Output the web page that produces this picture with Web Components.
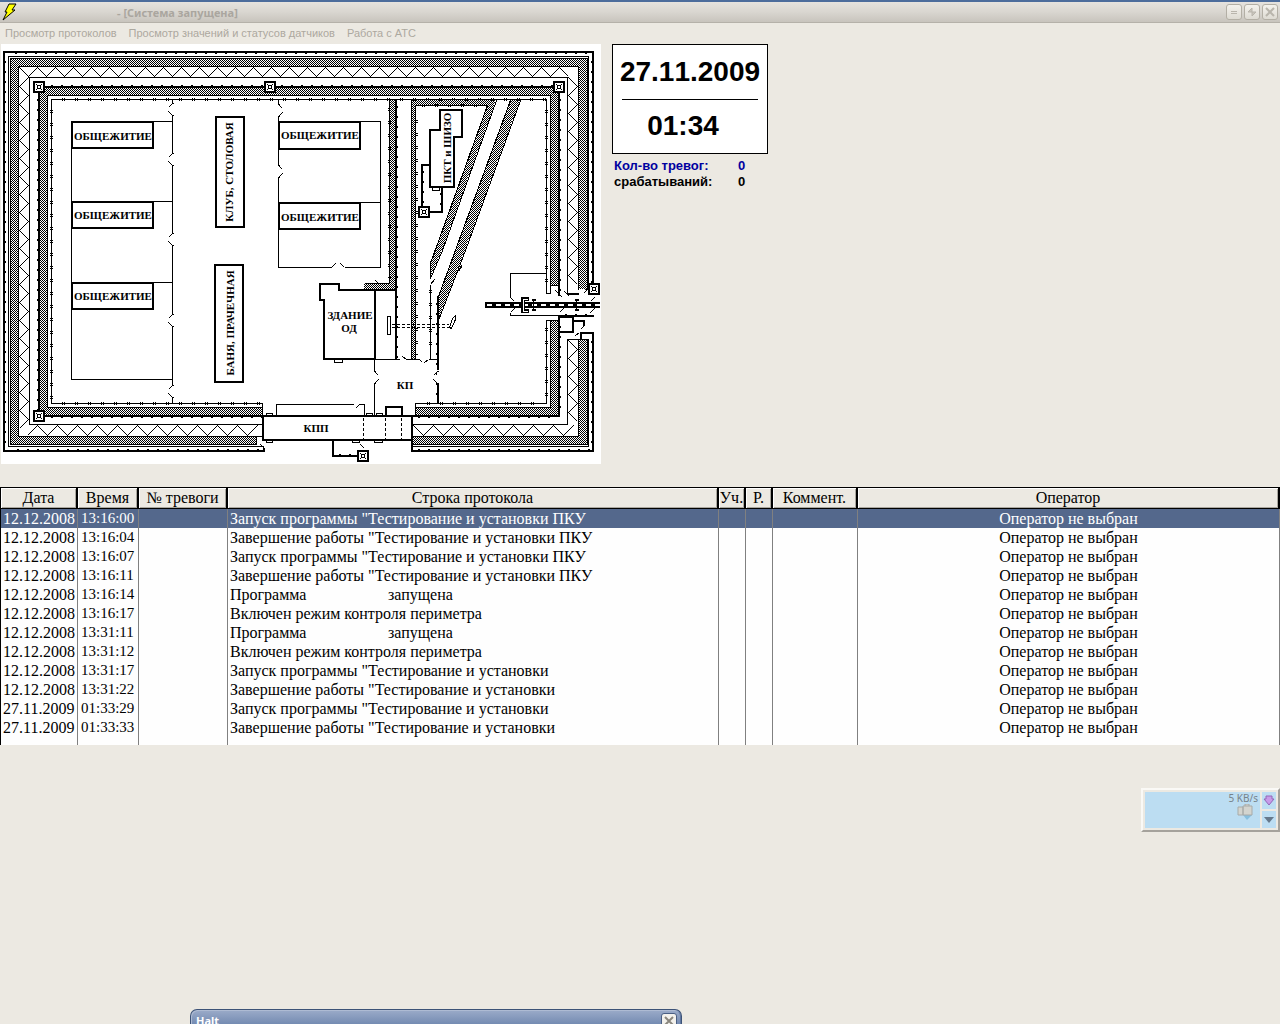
<!DOCTYPE html>
<html lang="ru">
<head>
<meta charset="utf-8">
<meta name="viewport" content="width=device-width, initial-scale=1">
<title>Система запущена</title>
<style>
  *, ::before, ::after {
    box-sizing: border-box;
  }

  body {
    background-color: #ece9e2;
    font-family: "Noto Sans", sans-serif;
    margin: 0;
    min-height: 100vh;
    overflow: hidden;
    position: relative;
  }

  main {
    align-items: flex-start;
    display: flex;
    gap: 11px;
    padding: 0 0 23px 1px;
  }
</style>
</head>
<body>
<app-title>- [Система запущена]</app-title>
<app-menu>
  <menu-item>Просмотр протоколов</menu-item>
  <menu-item>Просмотр значений и статусов датчиков</menu-item>
  <menu-item>Работа с АТС</menu-item>
</app-menu>
<main>
  <site-plan></site-plan>
  <aside>
    <clock-panel><span slot="date">27.11.2009</span><span slot="time">01:34</span></clock-panel>
    <alarm-counter value="0" style="--counter-color: #0000a0">Кол-во тревог:</alarm-counter>
    <alarm-counter value="0">срабатываний:</alarm-counter>
  </aside>
</main>
<protocol-log></protocol-log>
<traffic-meter>5 KB/s</traffic-meter>
<halt-window>Halt</halt-window>

<script>
const define = (name, markup, setup) => {
  customElements.define(name, class extends HTMLElement {
    constructor() {
      super();
      this.attachShadow({ mode: "open" });
      this.shadowRoot.innerHTML = `
      <style>
        *, ::before, ::after, :host {
          box-sizing: border-box;
        }
      </style>
      ${markup}`;
    }

    connectedCallback() {
      if (setup) setup(this, this.shadowRoot);
    }
  });
};

define("app-title", `
  <style>
    :host {
      align-items: center;
      background: linear-gradient(#e6e3de, #d9d6d0 50%, #c8c4bd);
      border-bottom: 1px solid #b5b1a9;
      border-top: 2px solid #4d6d9c;
      color: #aaa69f;
      display: flex;
      font: bold 11px "Noto Sans", sans-serif;
      height: 23px;
      padding: 0 2px;
    }
    h1 {
      flex: 1;
      font: inherit;
      margin: 0;
      padding-left: 98px;
      white-space: pre;
    }
    div {
      display: flex;
      gap: 2px;
    }
    button {
      background: linear-gradient(#f4f2ed, #dedbd3);
      border: 1px solid #b3afa5;
      border-radius: 3px;
      display: block;
      height: 16px;
      padding: 0;
      width: 16px;
    }
    svg {
      display: block;
    }
  </style>
  <svg width="17" height="18" viewBox="0 0 17 18" aria-hidden="true">
    <path d="M7 1h7l-4 6h3L1 17l4-8H3z" fill="#ff0" stroke="#000"/>
  </svg>
  <h1><slot></slot></h1>
  <div>
    <button type="button" aria-label="Свернуть"><svg width="14" height="14"><path d="M4 6.500h6M4 8.500h6" stroke="#b9b5ac"/></svg></button>
    <button type="button" aria-label="Восстановить"><svg width="14" height="14"><path d="M7 3v4H3zM7 11V7h4z" fill="#c9c5bc" stroke="#b9b5ac"/></svg></button>
    <button type="button" aria-label="Закрыть"><svg width="14" height="14"><path d="M3 3l8 8M11 3l-8 8" stroke="#b9b5ac" stroke-width="2"/></svg></button>
  </div>
`);

define("app-menu", `
  <style>
    :host {
      align-items: center;
      display: flex;
      gap: 12px;
      height: 21px;
      padding: 0 5px 2px;
    }
  </style>
  <slot></slot>
`);

define("menu-item", `
  <style>
    :host {
      display: block;
    }
    button {
      background: none;
      border: 0;
      color: #aca89f;
      display: block;
      font: 11px "Liberation Sans", sans-serif;
      padding: 0;
      white-space: nowrap;
    }
  </style>
  <button type="button"><slot></slot></button>
`);

// Zigzag fence: runs from `from` to `to`, bouncing between `a` and `b`
const zigzag = (axis, from, to, step, a, b) => {
  const points = [];
  for (let p = from, i = 0; p <= to; p += step, i++) {
    const q = i % 2 ? b : a;
    points.push(axis === "x" ? `${p},${q}` : `${q},${p}`);
  }
  return `<polyline points="${points.join(" ")}"/>`;
};

const tower = (x, y) => `<use href="#tower" x="${x}" y="${y}"/>`;

// Gates in a vertical fence, d is the side they open to
const gate = (x, y, d) => `
  <path d="M${x} ${y}l${4 * d} 4M${x + 4 * d} ${y + 8}l${-4 * d} 4"/>
  <path d="M${x - 1} ${y}h2M${x - 1} ${y + 12}h2"/>`;

define("site-plan", `
  <style>
    :host {
      display: block;
      flex: none;
    }
    svg {
      background-color: white;
      display: block;
    }
    g, use {
      fill: none;
      shape-rendering: crispEdges;
      stroke: black;
    }
    .hatch {
      fill: url(#hatch);
      stroke: none;
    }
    .thick {
      stroke-width: 2;
    }
    .posts {
      stroke-dasharray: 2 8;
    }
    .ticks {
      stroke-dasharray: 1 1 1 10;
      stroke-width: 3;
    }
    .dashes {
      stroke-dasharray: 3 2;
    }
    text {
      font: bold 11px "Liberation Serif", serif;
      text-anchor: middle;
    }
  </style>
  <svg width="600" height="420" viewBox="1 44 600 420" role="img" aria-label="План объекта">
    <defs>
      <pattern id="hatch" width="2" height="2" patternUnits="userSpaceOnUse">
        <rect width="2" height="2" fill="white"/>
        <path d="M0 0h1v1H0zM1 1h1v1H1z" fill="black" shape-rendering="crispEdges"/>
      </pattern>
      <g id="tower">
        <rect x="1" y="1" width="10" height="10" fill="white" stroke-width="2"/>
        <path d="M3 3l6 6M9 3l-6 6"/>
        <rect x="4.500" y="4.500" width="3" height="3" fill="white"/>
      </g>
    </defs>

    <g class="hatch">
      <path d="M10 58h577v231h-9V66H18v370h238v8H10z"/>
      <path d="M578 339h9v105H412v-8h166z"/>
      <path d="M40 88h519v197h-9V95H47v312h215v8H40z"/>
      <path d="M550 320h9v95H415v-8h135z"/>
      <path d="M389 100h6v189h-31v-6h25z"/>
      <path d="M411 100h85l-54 150-12 28v-15l57-158h-71v254h-5z"/>
      <path d="M510 100h10l-55 150-27 70v-24z"/>
    </g>

    <g transform="translate(.5 .5)">
      <path d="M588 289V56H8v390h255M587 289V58H10v386h246v-8"/>
      <path d="M578 289V66H18v370h245M567 293V77H29v347h234"/>
      <path d="M588 339v107H412M587 339v105H412M578 339v97H412M567 424V339h21M412 424h155"/>
      <path d="M550 293V95H47v312h215M546 293V99H51v304h211v12M546 293h4M550 285h9"/>
      <path d="M559 320h-13v83H415v12M550 320v87H415"/>
      ${zigzag("x", 19, 574, 9, 67, 76)}
      ${zigzag("y", 77, 430, 9, 28, 19)}
      ${zigzag("x", 27, 262, 10, 435, 425)}
      ${zigzag("y", 77, 291, 9, 568, 577)}
      ${zigzag("y", 340, 426, 9, 568, 577)}
      ${zigzag("x", 413, 573, 10, 425, 435)}

      <!-- dormitory yards -->
      <path d="M172 99v4M172 115v38M172 165v68M172 245v69M172 326v59M172 397v6"/>
      ${[103, 153, 233, 314, 385].map((y) => gate(172, y, -1)).join("")}
      <path d="M71 121h101M71 201h101M71 282h101M71 121v258h101"/>
      <path d="M278 99v5M278 116v49M278 177v90h53M344 267h36V121H278M278 202h102"/>
      ${gate(278, 104, 1)}${gate(278, 165, 1)}
      <path d="M331 267l4-4M340 263l4 4"/>

      <!-- inner corridors -->
      <path d="M389 100v183M364 283h25M364 289h31M411 99v260M415 359V105h72"/>
      <path d="M496 100l-54 150-12 28M487 105l-57 158M510 100l-72 196M520 100l-55 150-27 70"/>
      <path d="M430 260v18M430 284v75M430 284l4-5M458 271l3-6M375 280l4 4M455 273l6-6"/>
      <path d="M375 290h20M375 359h24M402 356l4 3h13M419 359l3 3M428 359h10M424 362l4-3"/>
      <path d="M374 359v11M374 383v32"/>
      ${gate(374, 371, 1)}${gate(437, 371, -1)}
      <rect x="387" y="316" width="3" height="18"/>
      <path class="dashes" d="M391 324h57M391 327h57"/>
      <path d="M449 327l3-9 3-3v4l-4 9z"/>
      <path d="M334 359v3h8v-3M432 187v3h7v-3"/>

      <!-- checkpoint -->
      <path d="M276 415V404h77M355 408l4-4h5v11"/>
      <path d="M266 415v-2h6v2M266 440v2h6v-2M366 415v-2h6v2M376 415v-2h6v2M352 440v2h7v-2M374 440v2h8v-2"/>
      <path class="dashes" d="M363 417v24M385 417v24M401 417v24"/>
      <path d="M260 444l4 4M360 444l4 4"/>

      <!-- railway entrance -->
      <path d="M546 273h-36v23M510 297l4 4M510 312v3h49M510 312l4-4"/>
      <path d="M555 290l7 7M564 291l5 5M583 293l4-4M594 297l-4 4M594 308l-5 5M559 312l4-4M575 335l4-3M580 329l4-4"/>
      <path d="M588 289h4M584 289h4"/>
    </g>

    <g class="thick">
      <path d="M593 284V52H4v399h260v-3M593 332v119H412"/>
      <path d="M559 296V87H39v329h224M559 316v100H412"/>
      <path d="M396 100v259M438 296v74M438 384v19"/>
      <path d="M263 416v24h149v-24zM412 416v36M333 440v16h25"/>
      <path d="M386 416v-9h16v9"/>
      <rect x="72" y="122" width="81" height="26"/>
      <rect x="72" y="202" width="81" height="26"/>
      <rect x="72" y="283" width="81" height="26"/>
      <rect x="279" y="122" width="81" height="27"/>
      <rect x="279" y="203" width="81" height="26"/>
      <rect x="216" y="117" width="28" height="110"/>
      <rect x="215" y="265" width="28" height="117"/>
      <path d="M320 284h19v6h36v69h-51v-59h-4z"/>
      <path d="M440 110h22v27h-8v50h-24v-57h10z" fill="white"/>
      <path d="M430 165h-8v42M442 187v25h-13"/>
      <path d="M567 294h12M559 316h35M559 317h14v15h-14M573 321h11v5M593 333h-12v6"/>
    </g>

    <!-- posts and barbed wire on the fences -->
    <g class="posts" transform="translate(.5 .5)">
      <path d="M14 53h576M5 60v386M591 60v222M591 340v108M16 449h246M417 449h172"/>
      <path d="M50 85h504M37 98v314M560 98v196M560 325v88M50 417h212M417 417h140"/>
      <path d="M397 105v252M436 302v98M423 170v36M440 192v18M338 454h18M564 314h28"/>
    </g>
    <g class="ticks" transform="translate(0 .5)">
      <path d="M62 99h484M62 403h200M427 403h116M422 105h60"/>
    </g>
    <g class="ticks" transform="translate(.5 0)">
      <path d="M51 110v290M546 110v180M546 328v72M389 108v170M416 120v235M430 290v65"/>
    </g>

    <g>
      <path d="M485 305h115" stroke-width="6"/>
      <path d="M487 305h113" stroke="white" stroke-width="2" stroke-dasharray="5 4"/>
      <path d="M529 299h-6v12h6" stroke-width="4"/>
      <path d="M528 299h-5v12h5" stroke="white" stroke-width="1"/>
      <path d="M532 300h4M532 310h4M575 300h4M575 310h4" stroke-width="2"/>
      <path d="M533.500 300v10M576.500 300v10"/>
      ${tower(33, 81)}${tower(264, 81)}${tower(553, 81)}${tower(33, 410)}
      ${tower(588, 283)}${tower(418, 206)}${tower(357, 450)}
    </g>

    <text x="113" y="140">ОБЩЕЖИТИЕ</text>
    <text x="113" y="219">ОБЩЕЖИТИЕ</text>
    <text x="113" y="300">ОБЩЕЖИТИЕ</text>
    <text x="320" y="139">ОБЩЕЖИТИЕ</text>
    <text x="320" y="221">ОБЩЕЖИТИЕ</text>
    <text transform="translate(233 172) rotate(-90)">КЛУБ, СТОЛОВАЯ</text>
    <text transform="translate(234 323) rotate(-90)">БАНЯ, ПРАЧЕЧНАЯ</text>
    <text transform="translate(451 148) rotate(-90)">ПКТ и ШИЗО</text>
    <text x="350" y="319">ЗДАНИЕ</text>
    <text x="349" y="332">ОД</text>
    <text x="405" y="389">КП</text>
    <text x="316" y="432">КПП</text>
  </svg>
`);

define("clock-panel", `
  <style>
    :host {
      background-color: white;
      border: 1px solid black;
      color: black;
      display: flex;
      flex-direction: column;
      font: bold 28px/54px "Liberation Sans", sans-serif;
      font-kerning: none;
      height: 110px;
      margin-bottom: 4px;
      text-align: center;
      width: 156px;
    }
    hr {
      border: 0;
      border-top: 1px solid black;
      margin: 0 9px;
      width: 136px;
    }
    .time {
      line-height: 52px;
      padding-right: 14px;
    }
  </style>
  <div><slot name="date"></slot></div>
  <hr>
  <div class="time"><slot name="time"></slot></div>
`);

define("alarm-counter", `
  <style>
    :host {
      color: var(--counter-color, black);
      display: grid;
      font: bold 13px/16px "Liberation Sans", sans-serif;
      grid-template-columns: 124px auto;
      padding-left: 2px;
    }
  </style>
  <span><slot></slot></span>
  <output></output>
`, (host, root) => {
  root.querySelector("output").textContent = host.getAttribute("value");
});

const START = 'Запуск программы "Тестирование и установки';
const STOP = 'Завершение работы "Тестирование и установки';
const RUN = "<span>Программа</span>запущена";
const GUARD = "Включен режим контроля периметра";

const entries = [
  ["12.12.2008", "13:16:00", `${START} ПКУ`],
  ["12.12.2008", "13:16:04", `${STOP} ПКУ`],
  ["12.12.2008", "13:16:07", `${START} ПКУ`],
  ["12.12.2008", "13:16:11", `${STOP} ПКУ`],
  ["12.12.2008", "13:16:14", RUN],
  ["12.12.2008", "13:16:17", GUARD],
  ["12.12.2008", "13:31:11", RUN],
  ["12.12.2008", "13:31:12", GUARD],
  ["12.12.2008", "13:31:17", START],
  ["12.12.2008", "13:31:22", STOP],
  ["27.11.2009", "01:33:29", START],
  ["27.11.2009", "01:33:33", STOP],
];

define("protocol-log", `
  <style>
    :host {
      display: block;
    }
    table {
      background-color: #fefefe;
      border-collapse: separate;
      border-left: 1px solid black;
      border-spacing: 0;
      border-top: 1px solid black;
      color: black;
      font: 16px/19px "Liberation Serif", serif;
      table-layout: fixed;
      width: 100%;
    }
    th {
      background-color: #ece9e2;
      border-bottom: 1px solid black;
      border-right: 2px solid black;
      box-shadow: inset 1px 1px white, inset -1px -1px #aaa79f;
      font-weight: 400;
      height: 21px;
      line-height: 18px;
      padding: 0;
      white-space: nowrap;
    }
    td {
      border-right: 1px solid #808080;
      height: 19px;
      overflow: hidden;
      padding: 0 2px;
      white-space: nowrap;
    }
    td:nth-child(2) {
      font-size: 15px;
      padding: 0 3px;
    }
    td:last-child {
      text-align: center;
    }
    td span {
      display: inline-block;
      width: 158px;
    }
    .selected td {
      background-color: #54688c;
      color: white;
    }
    tfoot td {
      height: 8px;
    }
    .date { width: 77px; }
    .time { width: 61px; }
    .alarm { width: 89px; }
    .short { width: 27px; }
    .comment { width: 85px; }
    .operator { width: 33%; }
  </style>
  <table>
    <colgroup>
      <col class="date"><col class="time"><col class="alarm"><col>
      <col class="short"><col class="short"><col class="comment"><col class="operator">
    </colgroup>
    <thead>
      <tr>
        <th>Дата</th><th>Время</th><th>№ тревоги</th><th>Строка протокола</th>
        <th>Уч.</th><th>Р.</th><th>Коммент.</th><th>Оператор</th>
      </tr>
    </thead>
    <tbody></tbody>
    <tfoot>
      <tr><td></td><td></td><td></td><td></td><td></td><td></td><td></td><td></td></tr>
    </tfoot>
  </table>
`, (host, root) => {
  root.querySelector("tbody").innerHTML = entries.map(([date, time, line], i) => `
    <tr${i ? "" : ' class="selected"'}>
      <td>${date}</td><td>${time}</td><td></td><td>${line}</td>
      <td></td><td></td><td></td><td>Оператор не выбран</td>
    </tr>`).join("");
});

define("traffic-meter", `
  <style>
    :host {
      background-color: #ece9e2;
      border: 2px solid;
      border-color: #faf9f6 #a5a29c #a5a29c #faf9f6;
      color: #77828a;
      display: grid;
      font: 10px/12px "Noto Sans", sans-serif;
      gap: 2px;
      grid-template-columns: 1fr 14px;
      height: 44px;
      padding: 2px;
      position: absolute;
      right: 0;
      top: 788px;
      width: 139px;
    }
    .graph, button {
      background-color: #bcddf2;
    }
    .graph {
      grid-row: span 2;
      padding-right: 2px;
      text-align: right;
    }
    .graph svg {
      display: block;
      margin: 0 5px 0 auto;
    }
    button {
      border: 0;
      display: grid;
      padding: 0;
      place-items: center;
    }
  </style>
  <div class="graph">
    <slot></slot>
    <svg width="16" height="17" viewBox="0 0 16 17" aria-hidden="true">
      <path d="M6 11h9l-5 5z" fill="#87bfdf"/>
      <path d="M1 3h5v8H1zM6 2h9v9H6zM8 2V0h4v2" fill="#d3d4cf" stroke="#a7aaa8"/>
    </svg>
  </div>
  <button type="button" aria-label="Загрузка"><svg width="12" height="12"><path d="M3 1h6v3h2L6 10 1 4h2z" fill="#c79be8" stroke="#9467b8"/></svg></button>
  <button type="button" aria-label="Меню"><svg width="12" height="12"><path d="M1 3h10L6 9z" fill="#66798c"/></svg></button>
`);

define("halt-window", `
  <style>
    :host {
      background: linear-gradient(#9babc9, #7289b0 15px);
      border: 1px solid #3d5377;
      border-bottom: 0;
      border-radius: 7px 7px 0 0;
      box-shadow: inset 1px 1px #aebbd3, inset -1px 0 #5f769f;
      bottom: 0;
      color: white;
      display: flex;
      font: bold 11px/15px "Noto Sans", sans-serif;
      height: 15px;
      justify-content: space-between;
      left: 190px;
      overflow: hidden;
      padding: 3px 4px 0 5px;
      position: absolute;
      width: 492px;
    }
    button {
      background-color: #f3f1ec;
      border: 1px solid #4a5f83;
      border-radius: 3px;
      flex: none;
      height: 16px;
      padding: 0;
      width: 16px;
    }
    svg {
      display: block;
    }
  </style>
  <span><slot></slot></span>
  <button type="button" aria-label="Закрыть"><svg width="14" height="14"><path d="M3 3l8 8M11 3l-8 8" stroke="#8a867d" stroke-width="2"/></svg></button>
`);
</script>
</body>
</html>
